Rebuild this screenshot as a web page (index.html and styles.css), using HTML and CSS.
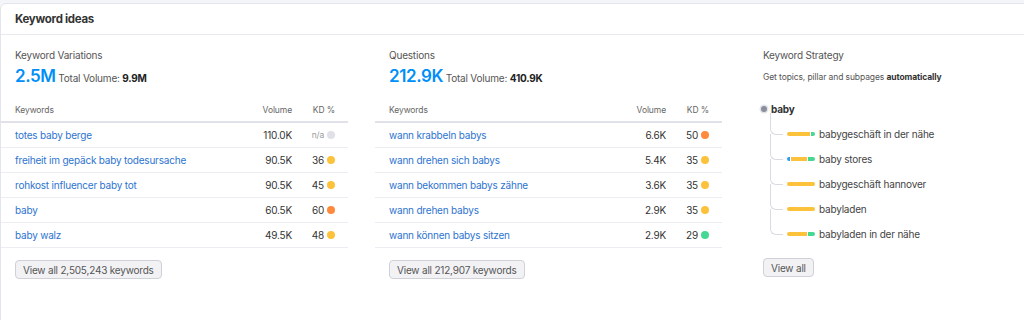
FILE: index.html
```html
<!DOCTYPE html>
<html lang="en">
<head>
  <meta charset="UTF-8">
  <title>Keyword ideas</title>
  <link rel="stylesheet" href="styles.css">
</head>
<body>
  <div class="card">
    <div class="card-head">
      <h2>Keyword ideas</h2>
    </div>

    <div class="card-body">
      <section class="col">
        <div class="col-title">Keyword Variations</div>
        <div class="summary"><span class="big">2.5M</span> Total Volume: <b>9.9M</b></div>

        <div class="kw-table">
          <div class="kw-row kw-head">
            <span>Keywords</span><span class="num">Volume</span><span class="kd">KD %</span>
          </div>
          <div class="kw-row">
            <a href="#">totes baby berge</a><span class="num">110.0K</span><span class="kd"><span class="na">n/a</span><i class="dot grey"></i></span>
          </div>
          <div class="kw-row">
            <a href="#">freiheit im gepäck baby todesursache</a><span class="num">90.5K</span><span class="kd">36<i class="dot yellow"></i></span>
          </div>
          <div class="kw-row">
            <a href="#">rohkost influencer baby tot</a><span class="num">90.5K</span><span class="kd">45<i class="dot yellow"></i></span>
          </div>
          <div class="kw-row">
            <a href="#">baby</a><span class="num">60.5K</span><span class="kd">60<i class="dot orange"></i></span>
          </div>
          <div class="kw-row">
            <a href="#">baby walz</a><span class="num">49.5K</span><span class="kd">48<i class="dot yellow"></i></span>
          </div>
        </div>

        <button class="btn">View all 2,505,243 keywords</button>
      </section>

      <section class="col">
        <div class="col-title">Questions</div>
        <div class="summary"><span class="big">212.9K</span> Total Volume: <b>410.9K</b></div>

        <div class="kw-table">
          <div class="kw-row kw-head">
            <span>Keywords</span><span class="num">Volume</span><span class="kd">KD %</span>
          </div>
          <div class="kw-row">
            <a href="#">wann krabbeln babys</a><span class="num">6.6K</span><span class="kd">50<i class="dot orange"></i></span>
          </div>
          <div class="kw-row">
            <a href="#">wann drehen sich babys</a><span class="num">5.4K</span><span class="kd">35<i class="dot yellow"></i></span>
          </div>
          <div class="kw-row">
            <a href="#">wann bekommen babys zähne</a><span class="num">3.6K</span><span class="kd">35<i class="dot yellow"></i></span>
          </div>
          <div class="kw-row">
            <a href="#">wann drehen babys</a><span class="num">2.9K</span><span class="kd">35<i class="dot yellow"></i></span>
          </div>
          <div class="kw-row">
            <a href="#">wann können babys sitzen</a><span class="num">2.9K</span><span class="kd">29<i class="dot green"></i></span>
          </div>
        </div>

        <button class="btn">View all 212,907 keywords</button>
      </section>

      <section class="col">
        <div class="col-title">Keyword Strategy</div>
        <div class="hint">Get topics, pillar and subpages <b>automatically</b></div>

        <div class="tree">
          <div class="tree-root"><i class="root-dot"></i>baby</div>
          <ul>
            <li><span class="bar"><i class="yellow" style="width:23px"></i><i class="green" style="width:4px"></i></span>babygeschäft in der nähe</li>
            <li><span class="bar"><i class="blue" style="width:3px"></i><i class="yellow" style="width:16px"></i><i class="green" style="width:7px"></i></span>baby stores</li>
            <li><span class="bar"><i class="yellow" style="width:28px"></i></span>babygeschäft hannover</li>
            <li><span class="bar"><i class="yellow" style="width:28px"></i></span>babyladen</li>
            <li><span class="bar"><i class="yellow" style="width:20px"></i><i class="green" style="width:7px"></i></span>babyladen in der nähe</li>
          </ul>
        </div>

        <button class="btn">View all</button>
      </section>
    </div>
  </div>
</body>
</html>
```

FILE: styles.css
```css
* {
  box-sizing: border-box;
}

body {
  margin: 0;
  padding-top: 3px;
  background: #f4f5f9;
  font-family: Inter, 'Noto Sans', sans-serif;
  font-size: 10px;
  letter-spacing: -0.2px;
  color: #333;
  overflow: hidden;
}

.card {
  width: 1200px;
  min-height: 330px;
  background: #fff;
  border: 1px solid #e4e5ec;
  border-radius: 6px;
}

.card-head {
  height: 31px;
  padding: 0 14px;
  border-bottom: 1px solid #e9eaf0;
}

.card-head h2 {
  margin: 0;
  font-size: 11.5px;
  font-weight: 700;
  letter-spacing: -0.3px;
  line-height: 30px;
  color: #333;
}

.card-body {
  display: grid;
  grid-template-columns: 347px 347px 347px;
  gap: 27px;
}

.col {
  padding-top: 12px;
}

.col-title,
.summary,
.hint,
.tree,
.btn {
  margin-left: 14px;
}

.col-title {
  line-height: 16px;
  color: #555;
}

.summary {
  margin-top: 2px;
  line-height: 22px;
  color: #555;
}

.summary b {
  color: #222;
  font-weight: 700;
}

.big {
  font-size: 17px;
  font-weight: 600;
  letter-spacing: -0.4px;
  color: #008ff8;
}

.hint {
  margin-top: 7px;
  font-size: 8.5px;
  letter-spacing: -0.1px;
  line-height: 14px;
  color: #555;
}

.hint b {
  color: #333;
}

.kw-table {
  margin-top: 11px;
}

.kw-row {
  display: grid;
  grid-template-columns: 1fr auto 43px;
  align-items: center;
  height: 25px;
  padding: 0 13px 0 14px;
  border-bottom: 1px solid #ecedf2;
}

.kw-head {
  height: 23px;
  padding-bottom: 2px;
  border-bottom: 2px solid #e0e1e9;
  font-size: 8.5px;
  letter-spacing: -0.1px;
  color: #666;
}

.kw-row a {
  color: #2d74d0;
  text-decoration: none;
}

.num {
  text-align: right;
}

.kd {
  display: flex;
  align-items: center;
  justify-content: flex-end;
  gap: 3px;
}

.na {
  font-size: 8.5px;
  color: #999;
}

.dot {
  width: 8px;
  height: 8px;
  border-radius: 50%;
}

.dot.grey { background: #dfe0e8; }
.dot.yellow { background: #fdc23c; }
.dot.orange { background: #ff8a3d; }
.dot.green { background: #45d894; }

.btn {
  display: block;
  margin-top: 12px;
  height: 19px;
  padding: 0 7px;
  font-family: inherit;
  font-size: 10px;
  letter-spacing: -0.2px;
  color: #555;
  background: #f2f2f5;
  border: 1px solid #cfd0d8;
  border-radius: 4px;
}

.tree {
  margin-top: 12px;
}

.tree-root {
  display: flex;
  align-items: center;
  height: 25px;
  font-weight: 700;
}

.root-dot {
  width: 6px;
  height: 6px;
  margin: 0 4px 0 -2px;
  border-radius: 50%;
  background: #8b8f9c;
  box-shadow: 0 0 0 1.5px #e3e4ea;
}

.tree ul {
  margin: 0;
  padding: 0;
  list-style: none;
}

.tree li {
  position: relative;
  display: flex;
  align-items: center;
  height: 25px;
  padding-left: 24px;
  color: #444;
}

/* connector from previous node to this one */
.tree li::before {
  content: "";
  position: absolute;
  left: 7px;
  top: -12px;
  width: 12px;
  height: 25px;
  border-left: 1px solid #d9dbe3;
  border-bottom: 1px solid #d9dbe3;
  border-bottom-left-radius: 6px;
}

.tree li:first-child::before {
  top: -8px;
  height: 21px;
}

.bar {
  display: flex;
  gap: 1px;
  height: 4px;
  margin-right: 4px;
  border-radius: 2px;
  overflow: hidden;
}

.bar i {
  display: block;
  height: 4px;
}

.bar .yellow { background: #fdc23c; }
.bar .green { background: #45d894; }
.bar .blue { background: #2a9df4; }
```
